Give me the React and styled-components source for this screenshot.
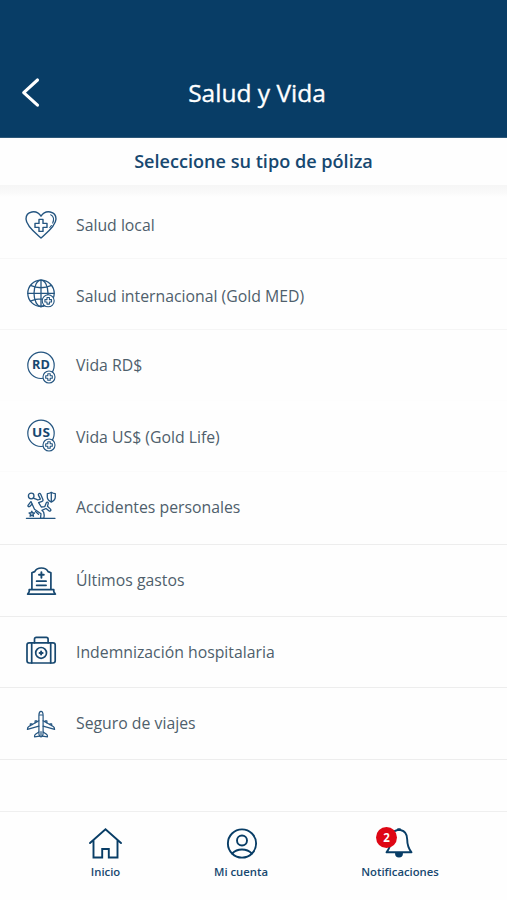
import React from 'react';
import styled, { createGlobalStyle } from 'styled-components';

const GlobalStyle = createGlobalStyle`
  * { box-sizing: border-box; }
  body { margin: 0; background: #fefefe; font-family: "Open Sans", "Noto Sans", sans-serif; }
`;

const navy = '#083d66';

const Screen = styled.div`
  display: flex;
  flex-direction: column;
  width: 507px;
  height: 900px;
  overflow: hidden;
  background: #fefefe;
`;

const Header = styled.header`
  display: grid;
  grid-template-columns: 60px 1fr 60px;
  align-items: center;
  height: 138px;
  padding: 48px 0 0;
  flex: none;
  background: ${navy};
  border-bottom: 1px solid #2d5879;
`;

const BackButton = styled.button`
  display: flex;
  justify-content: center;
  padding: 0 1px 2px 0;
  border: 0;
  background: none;
  color: #fff;
`;

const Title = styled.h1`
  margin: 1px 0 0 7px;
  text-align: center;
  color: #fff;
  font-size: 24.5px;
  line-height: 34px;
  font-weight: 500;
  -webkit-text-stroke: 0.35px #fff;
`;

const Subtitle = styled.h2`
  height: 47px;
  margin: 0;
  flex: none;
  text-align: center;
  color: #174870;
  font-size: 18.1px;
  line-height: 46px;
  font-weight: 600;
`;

const Shade = styled.div`
  height: 12px;
  flex: none;
  background: linear-gradient(#f6f6f6, #f9f9f9 60%, #fefefe);
`;

const List = styled.ul`
  margin: 0;
  padding: 0;
  flex: 1;
  list-style: none;
`;

const Item = styled.li`
  display: flex;
  align-items: center;
  gap: 17px;
  height: ${(p) => p.$height}px;
  padding: 0 0 ${(p) => p.$bottom || 0}px 23px;
  border-bottom: 1px solid ${(p) => p.$line};
`;

const Label = styled.span`
  padding-top: ${(p) => p.$drop}px;
  padding-bottom: ${(p) => p.$lift || 0}px;
  color: #4f5f6c;
  font-size: 15.8px;
  line-height: 24px;
  white-space: nowrap;
`;

const Glyph = styled.svg`
  flex: none;
  overflow: visible;
  fill: none;
  stroke: ${(p) => p.$tone || '#245580'};
  stroke-width: ${(p) => p.$weight || 1.4};
  stroke-linecap: round;
  stroke-linejoin: round;
`;

const CurrencyText = styled.text`
  fill: #174870;
  stroke: none;
  font: 700 12px "Open Sans", sans-serif;
  text-anchor: middle;
`;

const TabBar = styled.nav`
  display: flex;
  height: 89px;
  flex: none;
  padding: 13px 0 0 38px;
  border-top: 1px solid #efefef;
`;

const Tab = styled.a`
  display: flex;
  flex: none;
  flex-direction: column;
  align-items: center;
  width: ${(p) => p.$width}px;
  color: #174870;
  font-size: 11.3px;
  line-height: 16px;
  font-weight: 600;
`;

const TabIcon = styled.span`
  position: relative;
  display: flex;
  height: 36px;
  margin-bottom: 3px;
  padding-left: ${(p) => p.$shift || 0}px;
`;

const Badge = styled.span`
  position: absolute;
  left: -6px;
  top: 2px;
  width: 21px;
  height: 21px;
  border-radius: 50%;
  background: #de0715;
  color: #fff;
  font-size: 11.5px;
  font-weight: 700;
  line-height: 21px;
  text-align: center;
`;

function Icon({ children, ...rest }) {
  return <Glyph width="36" height="36" viewBox="0 0 36 36" {...rest}>{children}</Glyph>;
}

function CrossBadge({ x, y }) {
  return (
    <g transform={`translate(${x} ${y})`} strokeWidth="1.1">
      <circle r="6" fill="#fefefe" />
      <path d="M-1.2-3.3h2.4v2.1h2.1v2.4H1.2v2.1h-2.4V1.2h-2.1v-2.4h2.1z" />
    </g>
  );
}

const Heart = () => (
  <Icon>
    <path d="M18 31C13 26.500 3 19 3 12 3 4 13.500 2.200 18 9.200 22.500 2.200 33 4 33 12 33 19 23 26.500 18 31z" />
    <path d="M16 12.400h4v4h4v4h-4v4h-4v-4h-4v-4h4z" />
    <path d="M27.700 7.800c3.200 1.300 3.500 5 2 8.300m-1.300 2.400-1.600 2" strokeWidth="1.1" />
  </Icon>
);

const Globe = () => (
  <Icon $weight={1.3}>
    <circle cx="18" cy="17.3" r="13.2" />
    <path d="M18 4.1v26.4M4.8 17.3h26.4M7.4 9.4c6.5 2.9 14.7 2.9 21.2 0M7.4 25.2c6.5-2.9 14.7-2.9 21.2 0" />
    <ellipse cx="18" cy="17.3" rx="7" ry="13.2" />
    <CrossBadge x={25.2} y={24.8} />
  </Icon>
);

const Currency = ({ code, cy }) => (
  <Icon $weight={1.2}>
    <circle cx="18" cy={cy} r="13.2" />
    <CurrencyText x="18" y={cy + 3.7} textLength="17.8" lengthAdjust="spacingAndGlyphs">{code}</CurrencyText>
    <CrossBadge x={26} y={cy + 11.7} />
  </Icon>
);

const Accident = () => (
  <Icon $weight={1.3}>
    <circle cx="8.2" cy="6" r="2.8" />
    <path d="M3.4 28.3H32" />
    <path d="M10.800 8.300c1.600.4 2.900.9 4.100 1.700l2.500-.9-2-4c-.4-1.500 1.500-2.300 2.300-.9l2.200 5.300c.3.900 0 1.500-.8 1.800l-3.500 1.400 2.700 4.300 3.500-.4 1.500-3.800c.6-1.200 2.300-.6 1.900.8l-.7 2.600 3 2.900c1 1.200-.5 2.600-1.600 1.600l-2.900-2.200-4.100 1.800c2.600 1.600 2.800 4 1.900 8h-3.300l.5-4.600-6.500-4.500-3.200-7" />
    <path d="M7.900 11.600 5.200 15.200c-.8 1.100.6 2.100 1.500 1.200l2.500-2.300M12.500 21.500l3 2.800" />
    <path d="M28.300 2.300c-1.300.9-2.400 1.300-4 1.400V7c0 2.300 1.700 4 4 5.200 2.300-1.200 4-2.900 4-5.200V3.700c-1.600-.1-2.700-.5-4-1.400zM28.300 3v8.500" />
    <path d="m8.800 21.200.8 1.600 1.900.2-1.400 1.400.4 1.900-1.700-.9-1.700.9.4-1.900-1.400-1.400 1.900-.2z" fill="#245580" fillOpacity="0.35" />
  </Icon>
);

const Tomb = () => (
  <Icon $tone="#174870" $weight={1.7}>
    <path d="M8.900 26.700V9.800l2.800-1.200C13 6.100 15.300 5 18.400 5s5.400 1.100 6.700 3.600l2.800 1.200v16.900M6.200 26.700h24.600v2l1.600 2.400H4.600l1.600-2.400z" />
    <path d="M18.400 9.200v5.600M16 11.700h4.800" strokeWidth="1.900" />
    <path d="M13.600 18.200h9.500M13.600 22.300h9.500" />
  </Icon>
);

const Case = () => (
  <Icon $tone="#174870" $weight={1.7}>
    <rect x="4" y="8.800" width="28.2" height="20.200" rx="2.200" />
    <path d="M11.500 8.800V5.200c0-1.200.7-1.800 1.800-1.800h10c1.100 0 1.800.6 1.800 1.800v3.600M8.700 8.800V29M27.700 8.800V29" />
    <circle cx="18.1" cy="18.900" r="5.400" />
    <path d="M18.100 17.400v3M16.600 18.900h3" strokeWidth="2" />
  </Icon>
);

const Plane = () => (
  <Icon $weight={1.2}>
    <path d="M15.900 9.500c0-2 .8-4.200 2.100-4.200s2.100 2.200 2.100 4.200v17.300c0 2.400-1 4-2.100 4.200-1.100-.2-2.100-1.800-2.100-4.200z" />
    <path d="M15.900 14.800 5.800 20.500c-1 .6-1.400 1.500-1.400 2.900l11.500-3.200M20.100 14.800 30.200 20.500c1 .6 1.400 1.500 1.400 2.900l-11.500-3.200" />
    <path d="m15.900 26-3.400 2.300c-.8.6-1.100 1.400-1 2.500l5.200-.7M20.100 26l3.400 2.300c.8.6 1.100 1.400 1 2.500l-5.200-.7" />
    <path d="M7.300 19.600v-1.700h1.800v.7M12.100 16.800v-1.900h1.800v.8M28.700 19.600v-1.700h-1.800v.7M23.900 16.800v-1.900h-1.800v.8M18 25.500v5M16.500 9h3" />
  </Icon>
);

const policies = [
  { label: 'Salud local', icon: <Heart />, height: 62, bottom: 5, drop: 0, line: '#f7f7f7' },
  { label: 'Salud internacional (Gold MED)', icon: <Globe />, height: 71, drop: 4, line: '#f5f5f5' },
  { label: 'Vida RD$', icon: <Currency code="RD" cy={18.3} />, height: 71, drop: 0, lift: 1, line: '#fdfdfd' },
  { label: 'Vida US$ (Gold Life)', icon: <Currency code="US" cy={15.3} />, height: 71, drop: 2, line: '#fbfbfb' },
  { label: 'Accidentes personales', icon: <Accident />, height: 73, drop: 0, lift: 2, line: '#ededed' },
  { label: 'Últimos gastos', icon: <Tomb />, height: 72, drop: 0, lift: 1, line: '#ededed' },
  { label: 'Indemnización hospitalaria', icon: <Case />, height: 71, drop: 0, lift: 1, line: '#ededed' },
  { label: 'Seguro de viajes', icon: <Plane />, height: 72, drop: 0, lift: 2, line: '#ededed' },
];

const House = () => (
  <Icon $tone="#083d66" $weight={1.9}>
    <path d="M2 18 17.500 4.200 33 18M5.500 15.500v17h8.700V24h6.600v8.500h8.700v-17" strokeLinejoin="miter" />
  </Icon>
);

const Account = () => (
  <Icon $tone="#083d66" $weight={1.9}>
    <circle cx="18" cy="18.500" r="14.100" />
    <circle cx="18" cy="15.500" r="5" />
    <path d="M8.200 28.500c5-5.300 14.600-5.300 19.600 0" />
  </Icon>
);

const Bell = () => (
  <Icon $tone="#083d66" $weight={1.9}>
    <path d="M15.500 5c-4.600 1-6.700 4.600-6.700 9.400 0 5.400-1 8.600-4.300 12.900h25c-3.300-4.300-4.300-7.500-4.300-12.900C25.200 9.600 23.100 6 18.500 5z" />
    <path d="M16 4.200h2" />
    <path d="M14 28.500h6c0 1.800-1.200 3.100-3 3.100s-3-1.300-3-3.100z" fill="#083d66" />
  </Icon>
);

export default function App() {
  return (
    <Screen>
      <GlobalStyle />
      <Header>
        <BackButton aria-label="Volver">
          <Glyph width="24" height="36" viewBox="0 0 24 36" $tone="#fff" $weight={3.1}>
            <path d="M19.500 6 5.700 18.700l13.800 12.500" />
          </Glyph>
        </BackButton>
        <Title>Salud y Vida</Title>
      </Header>
      <Subtitle>Seleccione su tipo de póliza</Subtitle>
      <Shade />
      <List>
        {policies.map((p) => (
          <Item key={p.label} $height={p.height} $bottom={p.bottom} $line={p.line}>
            {p.icon}
            <Label $drop={p.drop} $lift={p.lift}>{p.label}</Label>
          </Item>
        ))}
      </List>
      <TabBar>
        <Tab $width={135}><TabIcon><House /></TabIcon>Inicio</Tab>
        <Tab $width={136}><TabIcon $shift={2}><Account /></TabIcon>Mi cuenta</Tab>
        <Tab $width={182}>
          <TabIcon><Bell /><Badge>2</Badge></TabIcon>Notificaciones
        </Tab>
      </TabBar>
    </Screen>
  );
}
